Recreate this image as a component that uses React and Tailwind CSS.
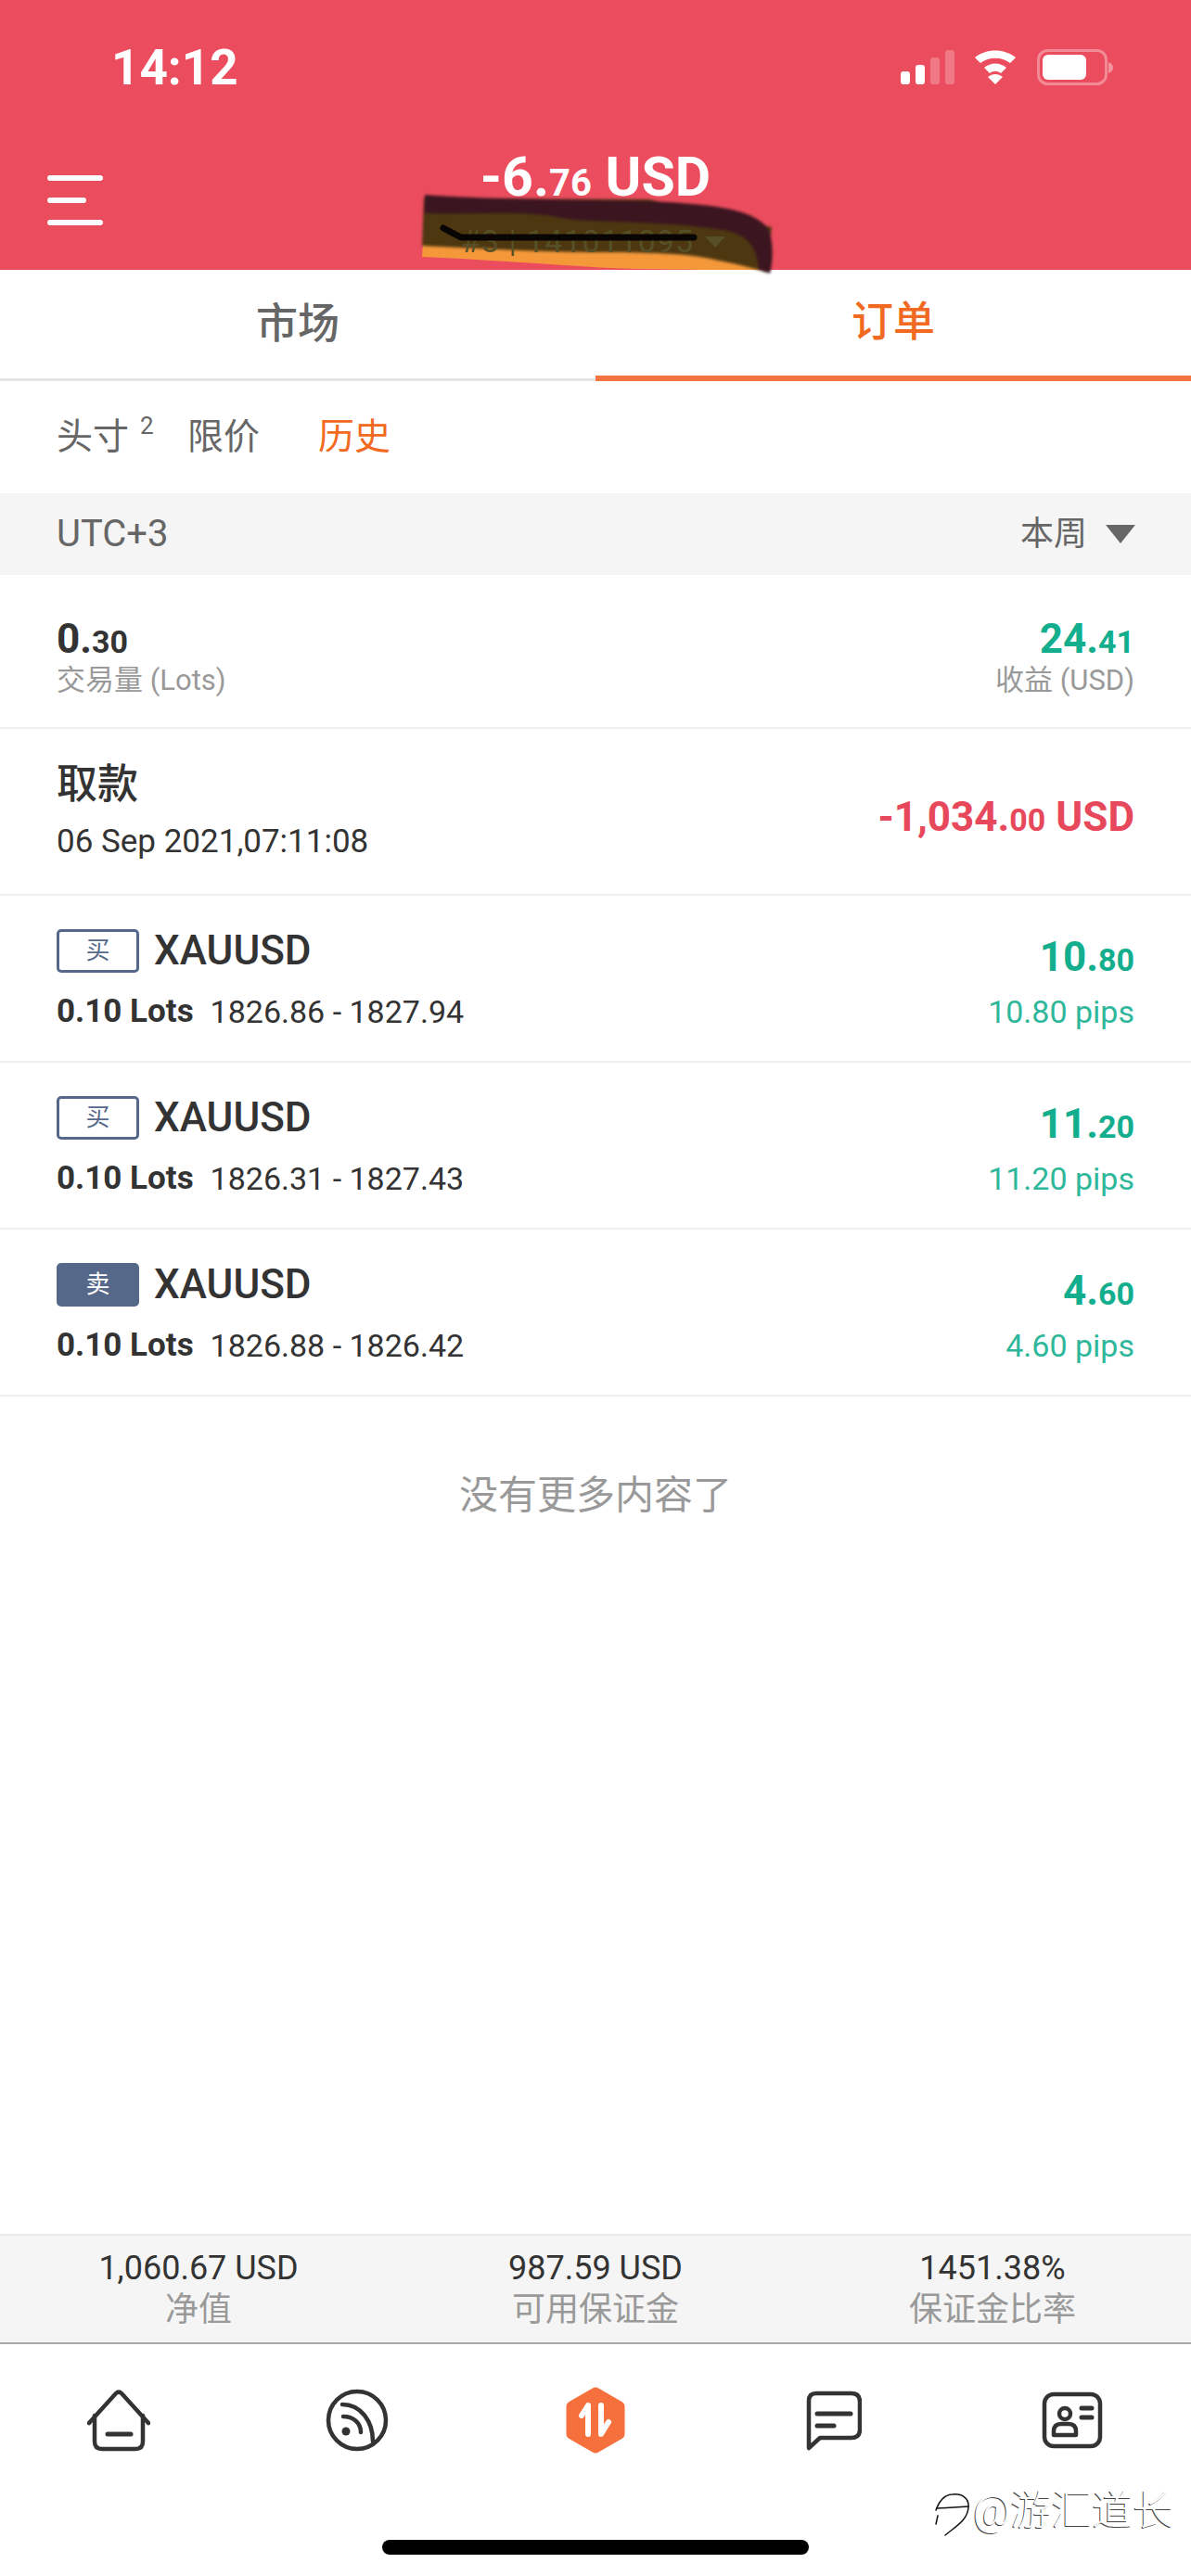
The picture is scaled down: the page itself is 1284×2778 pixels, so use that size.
const Amount = ({ big, small, unit, className }) => (
  <span className={`font-bold whitespace-nowrap ${className}`}>
    <span className="text-[44px]">{big}</span>
    <span className="text-[34px]">{small}</span>
    {unit && <span className="text-[44px]"> {unit}</span>}
  </span>
);

const orders = [
  { side: "买", sell: false, open: "1826.86", close: "1827.94", big: "10.", small: "80", pips: "10.80 pips" },
  { side: "买", sell: false, open: "1826.31", close: "1827.43", big: "11.", small: "20", pips: "11.20 pips" },
  { side: "卖", sell: true, open: "1826.88", close: "1826.42", big: "4.", small: "60", pips: "4.60 pips" },
];

const stats = [
  { value: "1,060.67 USD", label: "净值" },
  { value: "987.59 USD", label: "可用保证金" },
  { value: "1451.38%", label: "保证金比率" },
];

const StatusIcons = () => (
  <svg width="232" height="40" viewBox="0 0 232 40" fill="none">
    <rect x="0" y="24" width="10" height="14" rx="3" fill="#fff" />
    <rect x="16" y="17" width="10" height="21" rx="3" fill="#fff" />
    <rect x="32" y="9" width="10" height="29" rx="3" fill="#fff" fillOpacity="0.25" />
    <rect x="48" y="1" width="10" height="37" rx="3" fill="#fff" fillOpacity="0.25" />
    <path d="M80 9 C92 -1 112 -1 124 9 L118 15 C109 8 95 8 86 15 Z" fill="#fff" />
    <path d="M90 20 C97 14 107 14 114 20 L108 26 C104 23 100 23 96 26 Z" fill="#fff" />
    <path d="M102 38 L94 30 C99 26 105 26 110 30 Z" fill="#fff" />
    <rect x="148.5" y="1.5" width="73" height="36" rx="10" stroke="#fff" strokeOpacity="0.35" strokeWidth="3" />
    <rect x="153" y="6" width="47" height="27" rx="6" fill="#fff" />
    <path d="M224 14 C227 15 229 17 229 20 C229 23 227 25 224 26 Z" fill="#fff" fillOpacity="0.4" />
  </svg>
);

// the hand-drawn marker scribble over the account number
const Scribble = () => (
  <svg className="absolute left-[445px] top-[200px] z-10 font-['Roboto',sans-serif]" width="400" height="100" viewBox="445 200 400 100" fill="none">
    <path d="M456 262 L455 277 C520 280 580 284 640 288 C680 291 760 291 818 291 L818 262 Z" fill="#F4983A" />
    <g className="blur-[1.5px]">
      <path d="M457 214 L455 265 C520 268 580 272 640 272 C680 272 740 272 770 280 C790 284 810 288 826 294 L832 245 L700 215 Z" fill="#4C3710" />
      <path d="M458 210 C500 214 600 215 700 217 C770 220 810 226 826 244 C834 254 834 280 830 295 L818 290 C816 272 812 254 780 248 C700 236 640 242 600 234 C560 226 500 232 457 230 Z" fill="#3B1520" />
    </g>
    <text x="497" y="272" fontSize="34" fill="#574F27" letterSpacing="1">#3 | 141011095</text>
    <path d="M760 255 H782 L771 267 Z" fill="#574F27" />
    <path d="M478 246 L497 256 H748" stroke="#0A0505" strokeWidth="7" strokeLinecap="round" strokeLinejoin="round" />
  </svg>
);

const HomeIcon = () => (
  <svg width="68" height="68" viewBox="0 0 68 68" fill="none" stroke="#333" strokeWidth="4.5" strokeLinecap="round" strokeLinejoin="round">
    <path d="M2 37 L31 5 Q34 2 37 5 L66 37" />
    <path d="M8 29 V57 Q8 65 16 65 H52 Q60 65 60 57 V29" />
    <path d="M22 49 H47" strokeWidth="5" />
  </svg>
);

const FeedIcon = () => (
  <svg width="68" height="68" viewBox="0 0 68 68" fill="none" stroke="#333" strokeWidth="4.5" strokeLinecap="round">
    <circle cx="34" cy="34" r="31" />
    <path d="M18 17 C38 17 51 35 51 57" />
    <path d="M19 30 C30 30 38 37 38 47" />
    <circle cx="22" cy="46" r="4.5" fill="#333" stroke="none" />
  </svg>
);

const TradeIcon = () => (
  <svg width="64" height="72" viewBox="0 0 64 72" fill="none" strokeLinecap="round" strokeLinejoin="round">
    <path d="M32 6 L58 21 V51 L32 66 L6 51 V21 Z" fill="#F5703C" stroke="#F5703C" strokeWidth="11" />
    <path d="M24 51 V20 L17 31" stroke="#fff" strokeWidth="6" />
    <path d="M38 20 V51 L46 38" stroke="#fff" strokeWidth="6" />
  </svg>
);

const ChatIcon = () => (
  <svg width="60" height="65" viewBox="0 0 60 65" fill="none" stroke="#333" strokeWidth="4.5" strokeLinecap="round" strokeLinejoin="round">
    <path d="M11 3 H49 Q58 3 58 12 V42 Q58 51 49 51 H15 L3 62 V11 Q3 3 11 3 Z" />
    <path d="M12 25 H48" strokeWidth="5" />
    <path d="M12 38 H30" strokeWidth="5" />
  </svg>
);

const CardIcon = () => (
  <svg width="66" height="62" viewBox="0 0 66 62" fill="none" stroke="#333" strokeWidth="4.5" strokeLinecap="round" strokeLinejoin="round">
    <rect x="3" y="3" width="60" height="56" rx="10" />
    <circle cx="25" cy="24" r="6" />
    <path d="M13 47 V43 Q13 35 21 35 H29 Q37 35 37 43 V47 Z" />
    <path d="M43 18 H54" strokeWidth="5" />
    <path d="M43 28 H54" strokeWidth="5" />
  </svg>
);

const App = () => {
  return (
    <div className="relative flex h-[2778px] w-full flex-col overflow-hidden bg-white font-['Roboto','Noto_Sans_CJK_SC',sans-serif] text-[#333]">
      {/* red header */}
      <div className="flex h-[291px] shrink-0 flex-col bg-[#EB4D5E] text-white">
        <div className="flex items-start justify-between pl-[120px] pr-[81px] pt-[43px]">
          <span className="text-[53px] font-bold leading-[60px]">14:12</span>
          <div className="pt-[10px]">
            <StatusIcons />
          </div>
        </div>
        <div className="relative mt-[56px] flex justify-center">
          <div className="absolute left-[51px] top-[30px] flex flex-col items-start gap-[18px]">
            <div className="h-[6px] w-[60px] rounded-full bg-white" />
            <div className="h-[6px] w-[42px] rounded-full bg-white" />
            <div className="h-[6px] w-[60px] rounded-full bg-white" />
          </div>
          <span className="font-bold leading-[64px]">
            <span className="text-[59px]">-6.</span>
            <span className="text-[40px]">76</span>
            <span className="text-[59px]"> USD</span>
          </span>
        </div>
      </div>
      <Scribble />

      {/* market / orders tabs */}
      <div className="flex h-[120px] shrink-0 text-[45px] font-medium">
        <div className="flex flex-1 items-center justify-center border-b-[3px] border-[#E5E5E5] text-[#666]">市场</div>
        <div className="flex flex-1 items-center justify-center border-b-[6px] border-[#F5733F] text-[#F26A21]">订单</div>
      </div>

      {/* sub tabs */}
      <div className="flex h-[121px] shrink-0 items-center pl-[61px] text-[39px] text-[#666]">
        <div className="flex w-[141px] items-start">
          头寸
          <span className="ml-[12px] text-[26px] leading-[34px]">2</span>
        </div>
        <div className="w-[141px]">限价</div>
        <div className="text-[#F26A21]">历史</div>
      </div>

      {/* filter bar */}
      <div className="flex h-[88px] shrink-0 items-center justify-between bg-[#F5F5F5] pl-[61px] pr-[60px] text-[#666]">
        <span className="text-[40px]">UTC+3</span>
        <div className="flex items-center gap-[20px] text-[36px]">
          <span>本周</span>
          <svg width="32" height="20" viewBox="0 0 32 20">
            <path d="M0 0 H32 L16 20 Z" fill="#666" />
          </svg>
        </div>
      </div>

      {/* summary */}
      <div className="flex h-[166px] shrink-0 items-center justify-between border-b-2 border-[#EFEFEF] px-[61px] pt-[24px]">
        <div className="flex flex-col">
          <Amount big="0." small="30" className="leading-[30px]" />
          <span className="text-[31px] leading-[40px] text-[#999]">交易量 (Lots)</span>
        </div>
        <div className="flex flex-col items-end">
          <Amount big="24." small="41" className="leading-[30px] text-[#13AE8E]" />
          <span className="text-[31px] leading-[40px] text-[#999]">收益 (USD)</span>
        </div>
      </div>

      {/* withdrawal */}
      <div className="flex h-[180px] shrink-0 items-center justify-between border-b-2 border-[#EFEFEF] px-[61px]">
        <div className="flex flex-col gap-[14px]">
          <span className="text-[44px] font-medium leading-[52px]">取款</span>
          <span className="text-[35px] leading-[44px]">06 Sep 2021,07:11:08</span>
        </div>
        <Amount big="-1,034." small="00" unit="USD" className="mt-[12px] text-[#E8485C]" />
      </div>

      {/* closed orders */}
      {orders.map((order, i) => (
        <div key={i} className="flex h-[180px] shrink-0 flex-col justify-center gap-[16px] border-b-2 border-[#EFEFEF] px-[61px]">
          <div className="flex h-[56px] items-center justify-between">
            <div className="flex items-center gap-[16px]">
              <span
                className={`flex h-[47px] w-[89px] items-center justify-center rounded-[5px] border-[3px] border-[#56688A] text-[26px] ${
                  order.sell ? "bg-[#56688A] text-white" : "text-[#56688A]"
                }`}
              >
                {order.side}
              </span>
              <span className="text-[44px] font-medium leading-[52px]">XAUUSD</span>
            </div>
            <Amount big={order.big} small={order.small} className="mt-[14px] text-[#13AE8E]" />
          </div>
          <div className="flex h-[44px] items-center justify-between text-[34px]">
            <div className="flex items-center gap-[18px]">
              <span className="text-[35px] font-bold">0.10 Lots</span>
              <span>
                {order.open} - {order.close}
              </span>
            </div>
            <span className="text-[#2FB79B]">{order.pips}</span>
          </div>
        </div>
      ))}

      <div className="pt-[82px] text-center text-[42px] leading-[50px] text-[#999]">没有更多内容了</div>

      {/* account stats pinned above the tab bar */}
      <div className="mt-auto grid h-[119px] shrink-0 grid-cols-3 content-center border-b-2 border-t-2 border-b-[#AAAAAA] border-t-[#EBEBEB] bg-[#F5F5F5] text-center">
        {stats.map((stat) => (
          <div key={stat.label} className="flex flex-col">
            <span className="text-[36px] leading-[44px]">{stat.value}</span>
            <span className="text-[36px] leading-[46px] text-[#999]">{stat.label}</span>
          </div>
        ))}
      </div>

      {/* bottom nav */}
      <div className="flex h-[250px] shrink-0 flex-col">
        <div className="mt-[46px] grid h-[72px] grid-cols-5 place-items-center">
          <HomeIcon />
          <FeedIcon />
          <TradeIcon />
          <ChatIcon />
          <CardIcon />
        </div>
        <div className="mx-auto mt-[93px] h-[16px] w-[460px] rounded-full bg-black" />
      </div>

      {/* watermark on top of the screenshot */}
      <div className="absolute left-[1005px] top-[2680px] flex items-center">
        <svg width="44" height="56" viewBox="0 0 44 56" fill="none" stroke="#111" strokeWidth="1.5" strokeLinecap="round">
          <path d="M4 27 C8 16 14 10 22 10 C32 9 40 14 39 24 C38 38 26 44 14 54" />
          <path d="M5 25 L39 23" />
          <path d="M6 33 L4 42" />
        </svg>
        <span className="text-[44px] font-light leading-[56px] text-white [text-shadow:-1px_1px_0_#444]">@游汇道长</span>
      </div>
    </div>
  );
};

export default App;
